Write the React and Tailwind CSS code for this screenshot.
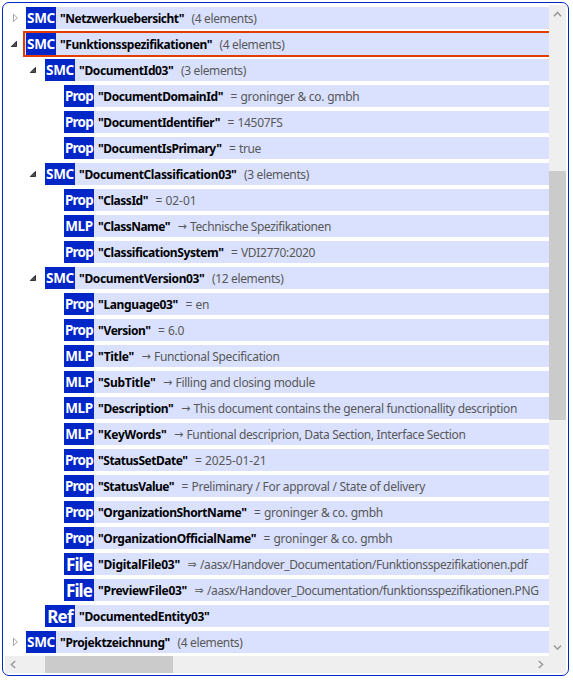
import { useLayoutEffect, useRef } from "react";

// d: depth, nw: width of the quoted name, m: marker, v / vw: value and its width
const ROWS = [
  { d: 0, tag: "SMC", name: "Netzwerkuebersicht", nw: 124, v: "(4 elements)", vw: 65, tree: "closed" },
  { d: 0, tag: "SMC", name: "Funktionsspezifikationen", nw: 152, v: "(4 elements)", vw: 65, tree: "open", selected: true },
  { d: 1, tag: "SMC", name: "DocumentId03", nw: 94.5, v: "(3 elements)", vw: 65, tree: "open" },
  { d: 2, tag: "Prop", name: "DocumentDomainId", nw: 125, m: "=", v: "groninger & co. gmbh", vw: 119 },
  { d: 2, tag: "Prop", name: "DocumentIdentifier", nw: 122, m: "=", v: "14507FS", vw: 45 },
  { d: 2, tag: "Prop", name: "DocumentIsPrimary", nw: 123.5, m: "=", v: "true", vw: 22 },
  { d: 1, tag: "SMC", name: "DocumentClassification03", nw: 157.5, v: "(3 elements)", vw: 65, tree: "open" },
  { d: 2, tag: "Prop", name: "ClassId", nw: 50, m: "=", v: "02-01", vw: 31 },
  { d: 2, tag: "MLP", name: "ClassName", nw: 72, m: "→", v: "Technische Spezifikationen", vw: 141 },
  { d: 2, tag: "Prop", name: "ClassificationSystem", nw: 125.5, m: "=", v: "VDI2770:2020", vw: 74 },
  { d: 1, tag: "SMC", name: "DocumentVersion03", nw: 125.5, v: "(12 elements)", vw: 71.5, tree: "open" },
  { d: 2, tag: "Prop", name: "Language03", nw: 80, m: "=", v: "en", vw: 13.5 },
  { d: 2, tag: "Prop", name: "Version", nw: 52.5, m: "=", v: "6.0", vw: 16 },
  { d: 2, tag: "MLP", name: "Title", nw: 36, m: "→", v: "Functional Specification", vw: 125.5 },
  { d: 2, tag: "MLP", name: "SubTitle", nw: 57.5, m: "→", v: "Filling and closing module", vw: 139.5 },
  { d: 2, tag: "MLP", name: "Description", nw: 75.5, m: "→", v: "This document contains the general functionallity description", vw: 323.5 },
  { d: 2, tag: "MLP", name: "KeyWords", nw: 68.5, m: "→", v: "Funtional descriprion, Data Section, Interface Section", vw: 279 },
  { d: 2, tag: "Prop", name: "StatusSetDate", nw: 89.5, m: "=", v: "2025-01-21", vw: 61.5 },
  { d: 2, tag: "Prop", name: "StatusValue", nw: 76, m: "=", v: "Preliminary / For approval / State of delivery", vw: 233.5 },
  { d: 2, tag: "Prop", name: "OrganizationShortName", nw: 148.5, m: "=", v: "groninger & co. gmbh", vw: 119 },
  { d: 2, tag: "Prop", name: "OrganizationOfficialName", nw: 158, m: "=", v: "groninger & co. gmbh", vw: 119 },
  { d: 2, tag: "File", name: "DigitalFile03", nw: 82, m: "⇒", v: "/aasx/Handover_Documentation/Funktionsspezifikationen.pdf", vw: 327.5 },
  { d: 2, tag: "File", name: "PreviewFile03", nw: 89, m: "⇒", v: "/aasx/Handover_Documentation/funktionsspezifikationen.PNG", vw: 331.5 },
  { d: 1, tag: "Ref", name: "DocumentedEntity03", nw: 130.5 },
  { d: 0, tag: "SMC", name: "Projektzeichnung", nw: 110, v: "(4 elements)", vw: 65, tree: "closed" },
];

const INDENT = ["w-[21px]", "w-[40px]", "w-[59px]"];
const TAG_SIZE = {
  SMC: { cls: "text-[13.5px] leading-[22px]", w: 28 },
  Prop: { cls: "text-[13.5px] leading-[22px]", w: 28 },
  MLP: { cls: "text-[13.5px] leading-[22px]", w: 27.5 },
  File: { cls: "text-[17px] leading-[24px]", w: 26 },
  Ref: { cls: "text-[17px] leading-[24px]", w: 25.5 },
};

// One line of text whose tracking is adjusted so that it fills `width`.
function Fit({ width, className = "", children }) {
  const ref = useRef(null);
  useLayoutEffect(() => {
    const el = ref.current;
    const fit = () => {
      el.style.letterSpacing = "0px";
      const natural = el.getBoundingClientRect().width;
      el.style.letterSpacing = (width - natural) / el.textContent.length + "px";
    };
    fit();
    document.fonts.ready.then(fit);
  }, [width]);
  return (
    <span className="flex shrink-0" style={{ width }}>
      <span ref={ref} className={"shrink-0 whitespace-pre " + className}>{children}</span>
    </span>
  );
}

function Toggle({ state }) {
  if (state === "open")
    return (
      <svg className="block" width="8" height="8" viewBox="0 0 8 8">
        <path d="M6.5 1.3V6.5H1.3Z" fill="#505050" stroke="#333" strokeWidth="1" />
      </svg>
    );
  return (
    <svg className="block" width="8" height="10" viewBox="0 0 8 10">
      <path d="M2.5 1.2V8.6L6.3 4.9Z" fill="#fff" stroke="#a6a6a6" strokeWidth="1" />
    </svg>
  );
}

function Marker({ m }) {
  if (m === "=") return <span className="block w-[10px] shrink-0">=</span>;
  return <span className="block w-[12.5px] shrink-0 font-['DejaVu_Sans'] text-[11px]">{m}</span>;
}

function Row({ row }) {
  const tag = TAG_SIZE[row.tag];
  return (
    <div className="flex h-[26px] items-center">
      <div className={"flex shrink-0 justify-end " + INDENT[row.d]}>
        {row.tree && (
          <div className={row.tree === "open" ? "pr-[8px]" : "pr-[7px]"}>
            <Toggle state={row.tree} />
          </div>
        )}
      </div>
      <div
        className={
          "flex min-w-0 flex-1 items-center bg-[#d9e1ff] " +
          (row.selected ? "-ml-[3px] h-[26px] border-y-2 border-l-2 border-[#e43b00]" : "h-[22px]")
        }
      >
        <div
          className={
            "flex h-[22px] w-[30px] shrink-0 items-start justify-center bg-[#0026c8] " +
            (row.selected ? "ml-[1px]" : "")
          }
        >
          <Fit width={tag.w} className={"font-bold text-white " + tag.cls}>{row.tag}</Fit>
        </div>
        <div className="flex items-center pl-1 pt-[2px] text-[12px] leading-[20px]">
          <Fit width={row.nw} className="font-bold text-black">{`"${row.name}"`}</Fit>
          {row.v && (
            <div className="flex items-center pl-[7.5px] text-[#585858]">
              {row.m && <Marker m={row.m} />}
              <Fit width={row.vw}>{row.v}</Fit>
            </div>
          )}
        </div>
      </div>
    </div>
  );
}

function Chevron({ d }) {
  return (
    <svg className="block" width="9" height="9" viewBox="0 0 9 9">
      <path d={d} fill="none" stroke="#9a9a9a" strokeWidth="1.5" />
    </svg>
  );
}

export default function App() {
  return (
    <div className="h-[681px] w-[573px] overflow-hidden bg-white p-[2px] font-['Noto_Sans','Open_Sans',sans-serif]">
      <div className="flex h-[674px] w-[567px] flex-col rounded-[7px] border border-[#0026c8] p-[2px]">
        <div className="flex h-[651px]">
          <div className="w-[544px] overflow-hidden">
            {ROWS.map((row) => (
              <Row key={row.name} row={row} />
            ))}
          </div>
          <div className="flex w-[17px] flex-col items-center bg-[#efefef] pt-[5px]">
            <Chevron d="M1 6.2 4.5 2.4 8 6.2" />
            <div className="mt-[152px] h-[249px] w-[17px] bg-[#cbcbcb]" />
            <div className="mt-[223px]">
              <Chevron d="M1 2.4 4.5 6.2 8 2.4" />
            </div>
          </div>
        </div>
        <div className="flex h-[17px] items-center bg-[#efefef] pl-[4px]">
          <Chevron d="M6.2 1 2.4 4.5 6.2 8" />
          <div className="ml-[27px] h-[17px] w-[128px] bg-[#cbcbcb]" />
          <div className="ml-[363px]">
            <Chevron d="M2.8 1 6.6 4.5 2.8 8" />
          </div>
        </div>
      </div>
    </div>
  );
}
